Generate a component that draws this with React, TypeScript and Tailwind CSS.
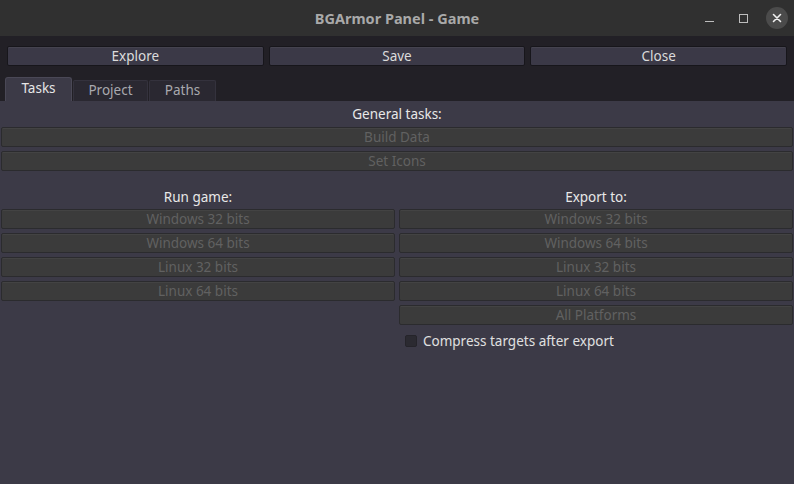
import React from "react";

const font = { fontFamily: '"Noto Sans", "Open Sans", sans-serif' };

function TopButton({ label }: { label: string }) {
  return (
    <div className="flex-1 h-[20px] flex items-center justify-center rounded-[2px] border border-[#17161b] bg-[#3b3947] text-[13.5px] text-[#dcdcdc] shadow-[inset_0_1px_0_#45434f]">
      {label}
    </div>
  );
}

function DisabledButton({ label }: { label: string }) {
  return (
    <div className="h-[20px] flex items-center justify-center rounded-[2px] border border-[#2b2b2e] bg-[#3b3b3b] text-[13.5px] text-[#616161] shadow-[inset_0_1px_0_#434343]">
      {label}
    </div>
  );
}

export default function App() {
  const runTargets = ["Windows 32 bits", "Windows 64 bits", "Linux 32 bits", "Linux 64 bits"];
  const exportTargets = [...runTargets, "All Platforms"];
  return (
    <div className="w-[794px] h-[484px] flex flex-col overflow-hidden bg-[#3c3a47]" style={font}>
      {/* Title bar */}
      <div className="h-[36px] shrink-0 bg-[#303030] relative flex items-center justify-center">
        <span className="text-[14.5px] font-bold text-[#a9a9a9] pt-[1px]" style={{ fontFamily: '"Noto Sans", sans-serif' }}>
          BGArmor Panel - Game
        </span>
        <div className="absolute right-0 top-0 h-[36px] flex items-center">
          <div className="w-[34px] h-[36px] flex items-center justify-center">
            <div className="w-[9px] h-[1px] bg-[#bdbdbd] mt-[7px]" />
          </div>
          <div className="w-[34px] h-[36px] flex items-center justify-center">
            <div className="w-[9px] h-[9px] border border-[#bdbdbd]" />
          </div>
          <div className="w-[34px] h-[36px] flex items-center justify-center">
            <div className="w-[22px] h-[22px] rounded-full bg-[#4b4b4b] flex items-center justify-center">
              <svg width="10" height="10" viewBox="0 0 10 10">
                <path d="M1.5 1.5 L8.5 8.5 M8.5 1.5 L1.5 8.5" stroke="#f0f0f0" strokeWidth="1.6" strokeLinecap="round" />
              </svg>
            </div>
          </div>
        </div>
      </div>

      {/* Toolbar band */}
      <div className="shrink-0 bg-[#222026] flex flex-col">
        <div className="flex gap-[5px] px-[7px] pt-[10px]">
          <TopButton label="Explore" />
          <TopButton label="Save" />
          <TopButton label="Close" />
        </div>
        <div className="flex items-end pl-[5px] mt-[11px] h-[24px]">
          <div className="w-[67px] h-[24px] bg-[#3c3a47] rounded-t-[3px] border-t border-x border-[#4a4856] flex items-center justify-center pb-[2px] text-[13.5px] text-[#e6e6e6]">
            Tasks
          </div>
          <div className="ml-[1px] w-[75px] h-[21px] bg-[#2a2831] rounded-t-[2px] border-t border-x border-[#34323d] flex items-center justify-center pb-[2px] text-[13.5px] text-[#a9a9ae]">
            Project
          </div>
          <div className="ml-[1px] w-[67px] h-[21px] bg-[#2a2831] rounded-t-[2px] border-t border-x border-[#34323d] flex items-center justify-center pb-[2px] text-[13.5px] text-[#a9a9ae]">
            Paths
          </div>
        </div>
      </div>

      {/* Panel */}
      <div className="flex-1 flex flex-col px-[1px]">
        <div className="h-[26px] flex items-center justify-center text-[13.5px] text-[#e8e8e8]">
          General tasks:
        </div>
        <div className="flex flex-col gap-[4px]">
          <DisabledButton label="Build Data" />
          <DisabledButton label="Set Icons" />
        </div>
        <div className="flex gap-[4px]">
          <div className="flex-1 flex flex-col">
            <div className="h-[38px] flex items-end justify-center pb-[2px] text-[13.5px] text-[#e8e8e8]">Run game:</div>
            <div className="flex flex-col gap-[4px]">
              {runTargets.map((t) => (
                <DisabledButton key={t} label={t} />
              ))}
            </div>
          </div>
          <div className="flex-1 flex flex-col">
            <div className="h-[38px] flex items-end justify-center pb-[2px] text-[13.5px] text-[#e8e8e8]">Export to:</div>
            <div className="flex flex-col gap-[4px]">
              {exportTargets.map((t) => (
                <DisabledButton key={t} label={t} />
              ))}
            </div>
            <div className="flex items-center mt-[8px] pl-[6px] h-[16px]">
              <div className="w-[12px] h-[12px] rounded-[2px] bg-[#2b2a31] border border-[#25242a]" />
              <span className="ml-[6px] text-[13.5px] text-[#e0e0e0]">Compress targets after export</span>
            </div>
          </div>
        </div>
      </div>
    </div>
  );
}
